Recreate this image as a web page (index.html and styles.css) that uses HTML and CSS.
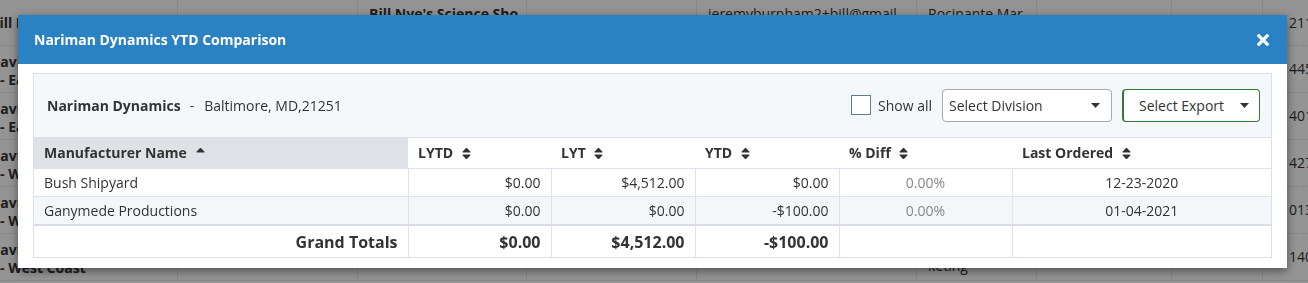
FILE: index.html
```html
<!DOCTYPE html>
<html lang="en">
<head>
    <meta charset="UTF-8">
    <meta name="viewport" content="width=device-width, initial-scale=1.0">
    <title>Customers</title>
    <link rel="stylesheet" href="styles.css">
</head>
<body>
    <div class="bg-grid">
        <div class="bg-cell first bold">Bill Nye</div>
        <div class="bg-cell"></div>
        <div class="bg-cell bold">Bill Nye's Science Sho<br>p</div>
        <div class="bg-cell"></div>
        <div class="bg-cell">jeremyburnham2+bill@gmail<br>.com</div>
        <div class="bg-cell">Rocinante Mar<br>keting</div>
        <div class="bg-cell"></div>
        <div class="bg-cell"></div>
        <div class="bg-cell last">21101</div>

        <div class="bg-cell first bold">David Lowe<br>- East Coast</div>
        <div class="bg-cell"></div><div class="bg-cell"></div><div class="bg-cell"></div>
        <div class="bg-cell"></div><div class="bg-cell"></div><div class="bg-cell"></div><div class="bg-cell"></div>
        <div class="bg-cell last">44502</div>

        <div class="bg-cell first bold">David Lowe<br>- East Coast</div>
        <div class="bg-cell"></div><div class="bg-cell"></div><div class="bg-cell"></div>
        <div class="bg-cell"></div><div class="bg-cell"></div><div class="bg-cell"></div><div class="bg-cell"></div>
        <div class="bg-cell last">40121</div>

        <div class="bg-cell first bold">David Lowe<br>- West Coast</div>
        <div class="bg-cell"></div><div class="bg-cell"></div><div class="bg-cell"></div>
        <div class="bg-cell"></div><div class="bg-cell"></div><div class="bg-cell"></div><div class="bg-cell"></div>
        <div class="bg-cell last">42701</div>

        <div class="bg-cell first bold">David Lowe<br>- West Coast</div>
        <div class="bg-cell"></div><div class="bg-cell"></div><div class="bg-cell"></div>
        <div class="bg-cell"></div><div class="bg-cell"></div><div class="bg-cell"></div><div class="bg-cell"></div>
        <div class="bg-cell last">01301</div>

        <div class="bg-cell first bold">David Lowe<br>- West Coast</div>
        <div class="bg-cell"></div><div class="bg-cell"></div><div class="bg-cell"></div>
        <div class="bg-cell"></div><div class="bg-cell">Rocinante Mar<br>keting</div><div class="bg-cell"></div><div class="bg-cell"></div>
        <div class="bg-cell last">14001</div>
    </div>

    <div class="backdrop"></div>

    <div class="modal">
        <div class="modal-header">
            <span class="modal-title">Nariman Dynamics YTD Comparison</span>
            <svg class="close" width="12" height="12" viewBox="0 80 352 352"><path fill="#fff" d="M242.72 256l100.07-100.07c12.28-12.28 12.28-32.19 0-44.48l-22.24-22.24c-12.28-12.28-32.19-12.28-44.48 0L176 189.280 75.93 89.21c-12.28-12.28-32.19-12.28-44.48 0L9.21 111.45c-12.28 12.28-12.28 32.19 0 44.48L109.28 256 9.21 356.07c-12.28 12.28-12.28 32.19 0 44.48l22.24 22.24c12.28 12.28 32.2 12.28 44.48 0L176 322.72l100.07 100.07c12.28 12.28 32.2 12.28 44.48 0l22.24-22.24c12.28-12.28 12.28-32.19 0-44.48L242.72 256z"/></svg>
        </div>
        <div class="modal-body">
            <div class="panel">
                <div class="toolbar">
                    <strong>Nariman Dynamics</strong>
                    <span class="sep">-</span>
                    <span>Baltimore, MD,21251</span>
                    <div class="controls">
                        <label class="check"><span class="box"></span>Show all</label>
                        <div class="select">
                            <span>Select Division</span>
                            <svg width="9" height="5" viewBox="0 0 9 5"><path d="M0 0h9L4.5 5z" fill="#333"/></svg>
                        </div>
                        <div class="select export">
                            <span>Select Export</span>
                            <svg width="9" height="5" viewBox="0 0 9 5"><path d="M0 0h9L4.5 5z" fill="#333"/></svg>
                        </div>
                    </div>
                </div>
                <table class="ytd">
                    <colgroup>
                        <col style="width:374px">
                        <col style="width:143px">
                        <col style="width:144px">
                        <col style="width:144px">
                        <col style="width:173px">
                        <col style="width:259px">
                    </colgroup>
                    <thead>
                        <tr>
                            <th class="sorted">Manufacturer Name <svg class="sort" width="9" height="11" viewBox="0 60 320 392"><path fill="#333" d="M279 224H41c-21.4 0-32.1-25.9-17-41L143 64c9.4-9.4 24.6-9.4 33.9 0l119 119c15.2 15.1 4.5 41-16.9 41z"/></svg></th>
                            <th>LYTD <svg class="sort" width="9" height="11" viewBox="0 60 320 392"><path fill="#333" d="M41 288h238c21.4 0 32.1 25.9 17 41L177 448c-9.4 9.4-24.6 9.4-33.9 0L24 329c-15.1-15.1-4.4-41 17-41zm255-105L177 64c-9.4-9.4-24.6-9.4-33.9 0L24 183c-15.1 15.1-4.4 41 17 41h238c21.4 0 32.1-25.9 17-41z"/></svg></th>
                            <th>LYT <svg class="sort" width="9" height="11" viewBox="0 60 320 392"><path fill="#333" d="M41 288h238c21.4 0 32.1 25.9 17 41L177 448c-9.4 9.4-24.6 9.4-33.9 0L24 329c-15.1-15.1-4.4-41 17-41zm255-105L177 64c-9.4-9.4-24.6-9.4-33.9 0L24 183c-15.1 15.1-4.4 41 17 41h238c21.4 0 32.1-25.9 17-41z"/></svg></th>
                            <th>YTD <svg class="sort" width="9" height="11" viewBox="0 60 320 392"><path fill="#333" d="M41 288h238c21.4 0 32.1 25.9 17 41L177 448c-9.4 9.4-24.6 9.4-33.9 0L24 329c-15.1-15.1-4.4-41 17-41zm255-105L177 64c-9.4-9.4-24.6-9.4-33.9 0L24 183c-15.1 15.1-4.4 41 17 41h238c21.4 0 32.1-25.9 17-41z"/></svg></th>
                            <th>% Diff <svg class="sort" width="9" height="11" viewBox="0 60 320 392"><path fill="#333" d="M41 288h238c21.4 0 32.1 25.9 17 41L177 448c-9.4 9.4-24.6 9.4-33.9 0L24 329c-15.1-15.1-4.4-41 17-41zm255-105L177 64c-9.4-9.4-24.6-9.4-33.9 0L24 183c-15.1 15.1-4.4 41 17 41h238c21.4 0 32.1-25.9 17-41z"/></svg></th>
                            <th>Last Ordered <svg class="sort" width="9" height="11" viewBox="0 60 320 392"><path fill="#333" d="M41 288h238c21.4 0 32.1 25.9 17 41L177 448c-9.4 9.4-24.6 9.4-33.9 0L24 329c-15.1-15.1-4.4-41 17-41zm255-105L177 64c-9.4-9.4-24.6-9.4-33.9 0L24 183c-15.1 15.1-4.4 41 17 41h238c21.4 0 32.1-25.9 17-41z"/></svg></th>
                        </tr>
                    </thead>
                    <tbody>
                        <tr>
                            <td>Bush Shipyard</td>
                            <td class="num">$0.00</td>
                            <td class="num">$4,512.00</td>
                            <td class="num">$0.00</td>
                            <td class="pct">0.00%</td>
                            <td class="date">12-23-2020</td>
                        </tr>
                        <tr class="alt">
                            <td>Ganymede Productions</td>
                            <td class="num">$0.00</td>
                            <td class="num">$0.00</td>
                            <td class="num">-$100.00</td>
                            <td class="pct">0.00%</td>
                            <td class="date">01-04-2021</td>
                        </tr>
                    </tbody>
                    <tfoot>
                        <tr>
                            <td class="num">Grand Totals</td>
                            <td class="num">$0.00</td>
                            <td class="num">$4,512.00</td>
                            <td class="num">-$100.00</td>
                            <td></td>
                            <td></td>
                        </tr>
                    </tfoot>
                </table>
            </div>
        </div>
    </div>
</body>
</html>
```

FILE: styles.css
```css
html, body {
    height: 100%;
}

body {
    margin: 0;
    font-family: "Open Sans", "DejaVu Sans", sans-serif;
    font-size: 14px;
    color: #333;
    background: #fff;
    overflow: hidden;
}

/* page behind the modal */
.bg-grid {
    display: grid;
    grid-template-columns: 178px 180px 169px 170px 220px 120px 135px 91px 60px;
    grid-template-rows: 46px;
    grid-auto-rows: 47px;
}

.bg-cell {
    display: flex;
    align-items: center;
    padding: 0 11px;
    line-height: 18px;
    white-space: nowrap;
    overflow: hidden;
    border-right: 1px solid #eaeaea;
    border-bottom: 1px solid #eaeaea;
}

.bg-cell.first {
    display: block;
    padding: 7px 0 0 0;
    text-indent: -10px;
    overflow: visible;
}

.bg-cell.first:first-child {
    padding-top: 14px;
}

.bg-cell.last {
    padding-left: 26px;
}

.bold {
    font-weight: 700;
}

.backdrop {
    position: fixed;
    inset: 0;
    background: rgba(0, 0, 0, 0.42);
}

/* modal */
.modal {
    position: absolute;
    left: 18px;
    top: 15px;
    width: 1269px;
    background: #fff;
    box-shadow: 0 3px 9px rgba(0, 0, 0, 0.45);
}

.modal-header {
    height: 49px;
    background: #2b82c2;
    color: #fff;
    display: flex;
    align-items: center;
    justify-content: space-between;
    padding: 0 18px 0 16px;
}

.modal-title {
    font-weight: 700;
}

.modal-body {
    padding: 9px 15px 10px;
}

.panel {
    border: 1px solid #dae0e7;
}

.toolbar {
    height: 64px;
    background: #f5f8fb;
    border-bottom: 1px solid #dae0e7;
    display: flex;
    align-items: center;
    padding: 0 11px 1px 13px;
    box-sizing: border-box;
}

.sep {
    margin: 0 10px 0 9px;
}

.controls {
    margin-left: auto;
    display: flex;
    align-items: center;
    gap: 10px;
}

.check {
    display: flex;
    align-items: center;
    gap: 7px;
}

.box {
    width: 18px;
    height: 18px;
    border: 1px solid #5e7e8e;
    background: #fff;
}

.select {
    box-sizing: border-box;
    width: 170px;
    height: 33px;
    border: 1px solid #a8a8a8;
    border-radius: 4px;
    background: #fff;
    display: flex;
    align-items: center;
    justify-content: space-between;
    padding: 0 11px 0 6px;
}

.select.export {
    width: 138px;
    border-color: #2e7d32;
    border-left-width: 2px;
    padding: 0 10px 0 15px;
}

/* table */
.ytd {
    width: 100%;
    table-layout: fixed;
    border-collapse: collapse;
}

.ytd th {
    height: 29px;
    padding: 0 10px 1px;
    text-align: left;
    font-weight: 700;
    background: #fff;
    border-bottom: 1px solid #dde3ea;
    white-space: nowrap;
}

.ytd th.sorted {
    background: #dee1e5;
}

.sort {
    margin-left: 5px;
    vertical-align: -1px;
}

.ytd td {
    height: 27px;
    padding: 0 10px;
    border: 1px solid #dde3ea;
    border-top: none;
    white-space: nowrap;
}

.ytd td:first-child {
    border-left: none;
}

.ytd td:last-child {
    border-right: none;
}

.ytd tr.alt td {
    background: #f4f7fa;
}

.ytd .num {
    text-align: right;
}

.ytd .pct {
    text-align: center;
    color: #888;
}

.ytd .date {
    text-align: center;
}

.ytd tfoot td {
    height: 31px;
    border-top: 2px solid #d8dee6;
    border-bottom: none;
    font-size: 16px;
    font-weight: 700;
}
```
